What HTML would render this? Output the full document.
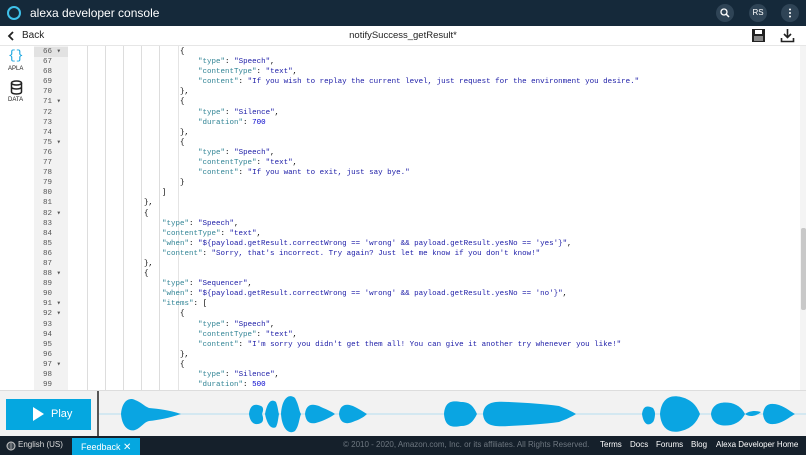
<!DOCTYPE html>
<html><head><meta charset="utf-8"><style>
*{margin:0;padding:0;box-sizing:border-box}
body{width:806px;height:455px;overflow:hidden;background:#fff;font-family:"Liberation Sans",sans-serif;position:relative}
.hdr{position:absolute;left:0;top:0;width:806px;height:26px;background:#15293a}
.ttl{position:absolute;left:30px;top:6px;color:#fff;font-size:12px}
.circ{position:absolute;top:4px;width:18px;height:18px;border-radius:50%;background:#2f4456;color:#fff;font-size:8px;text-align:center;line-height:18px}
.tb{position:absolute;left:0;top:26px;width:806px;height:20px;background:#fff;border-bottom:1px solid #e6e6e6}
.side{position:absolute;left:0;top:46px;width:34px;height:344px;background:#fff}
.gut{position:absolute;left:34px;top:46px;width:34px;height:344px;background:#f2f2f2}
.ed{position:absolute;left:68px;top:46px;width:732px;height:344px;overflow:hidden;
background:linear-gradient(#ddd,#ddd) 19px 0/1px 100% no-repeat,linear-gradient(#ddd,#ddd) 37px 0/1px 100% no-repeat,linear-gradient(#ddd,#ddd) 55px 0/1px 100% no-repeat,linear-gradient(#ddd,#ddd) 73px 0/1px 100% no-repeat,linear-gradient(#ddd,#ddd) 91px 0/1px 100% no-repeat,linear-gradient(#e4e4e4,#e4e4e4) 110px 0/1px 100% no-repeat,#fff}
.code,.nums{font-family:"Liberation Mono",monospace;font-size:7.5px;line-height:10.1px;white-space:pre}
.code{position:absolute;left:72px;top:47px;color:#000}
.nums{position:absolute;left:34px;top:47px;width:33px;text-align:right;color:#555;padding-right:6px}
.k{color:#318495}.s{color:#1a1aa6}.n{color:#0000cd}
.sb{position:absolute;left:800px;top:46px;width:6px;height:344px;background:#f4f4f4}
.aud{position:absolute;left:0;top:390px;width:806px;height:46px;background:#f2f2f2;border-top:1px solid #ddd}
.play{position:absolute;left:6px;top:8px;width:85px;height:31px;background:#05a7e0;color:#fff;font-size:11px}
.ft{position:absolute;left:0;top:436px;width:806px;height:19px;background:#15202b;font-size:8px;color:#fff}
</style></head><body>
<div class="hdr">
<div style="position:absolute;left:7px;top:6px;width:14px;height:14px;border-radius:50%;border:2.5px solid #3fc1ea"></div>
<div class="ttl">alexa developer console</div>
<div class="circ" style="left:716px"><svg width="18" height="18"><circle cx="8" cy="8" r="3" fill="none" stroke="#fff" stroke-width="1.3"/><path d="M10 10l3 3" stroke="#fff" stroke-width="1.5"/></svg></div>
<div class="circ" style="left:749px">RS</div>
<div class="circ" style="left:781px"><svg width="18" height="18"><circle cx="9" cy="5.5" r="1" fill="#fff"/><circle cx="9" cy="9" r="1" fill="#fff"/><circle cx="9" cy="12.5" r="1" fill="#fff"/></svg></div>
</div>
<div class="tb">
<svg style="position:absolute;left:7px;top:5px" width="8" height="10"><path d="M6 1L2 5l4 4" stroke="#222" stroke-width="1.8" fill="none"/></svg>
<div style="position:absolute;left:22px;top:4px;font-size:10px;color:#222">Back</div>
<div style="position:absolute;left:0;width:806px;top:4px;text-align:center;font-size:9.5px;color:#222">notifySuccess_getResult*</div>
<svg style="position:absolute;left:751px;top:2px" width="15" height="15"><rect x="1" y="1" width="13" height="13" fill="#222"/><rect x="4" y="2" width="7" height="4" fill="#fff"/><rect x="3" y="8" width="9" height="5" fill="#888"/></svg>
<svg style="position:absolute;left:780px;top:2px" width="15" height="15"><path d="M7.5 1v8M4 6l3.5 3.5L11 6M1.5 10v3.5h12V10" stroke="#222" stroke-width="1.6" fill="none"/></svg>
</div>
<div class="side">
<div style="position:absolute;left:8px;top:2px;color:#1aa6e0;font-size:13px;font-family:'Liberation Mono',monospace">{}</div>
<div style="position:absolute;left:8px;top:20px;font-size:6px;color:#222">APLA</div>
<svg style="position:absolute;left:10px;top:34px" width="13" height="15"><ellipse cx="6.5" cy="3" rx="5" ry="2" fill="none" stroke="#222" stroke-width="1.5"/><path d="M1.5 3v9c0 2.6 10 2.6 10 0V3M1.5 7c0 2.6 10 2.6 10 0" stroke="#222" stroke-width="1.5" fill="none"/></svg>
<div style="position:absolute;left:8px;top:51px;font-size:6px;color:#222">DATA</div>
</div>
<div class="gut"><div style="position:absolute;left:0;top:1px;width:34px;height:10px;background:#e2e2e2"></div></div>
<div class="ed"></div>
<div class="nums">66 ▾
67  
68  
69  
70  
71 ▾
72  
73  
74  
75 ▾
76  
77  
78  
79  
80  
81  
82 ▾
83  
84  
85  
86  
87  
88 ▾
89  
90  
91 ▾
92 ▾
93  
94  
95  
96  
97 ▾
98  
99  </div>
<div class="code">                        {
                            <span class="k">"type"</span>: <span class="s">"Speech"</span>,
                            <span class="k">"contentType"</span>: <span class="s">"text"</span>,
                            <span class="k">"content"</span>: <span class="s">"If you wish to replay the current level, just request for the environment you desire."</span>
                        },
                        {
                            <span class="k">"type"</span>: <span class="s">"Silence"</span>,
                            <span class="k">"duration"</span>: <span class="n">700</span>
                        },
                        {
                            <span class="k">"type"</span>: <span class="s">"Speech"</span>,
                            <span class="k">"contentType"</span>: <span class="s">"text"</span>,
                            <span class="k">"content"</span>: <span class="s">"If you want to exit, just say bye."</span>
                        }
                    ]
                },
                {
                    <span class="k">"type"</span>: <span class="s">"Speech"</span>,
                    <span class="k">"contentType"</span>: <span class="s">"text"</span>,
                    <span class="k">"when"</span>: <span class="s">"${payload.getResult.correctWrong == 'wrong' &amp;&amp; payload.getResult.yesNo == 'yes'}"</span>,
                    <span class="k">"content"</span>: <span class="s">"Sorry, that's incorrect. Try again? Just let me know if you don't know!"</span>
                },
                {
                    <span class="k">"type"</span>: <span class="s">"Sequencer"</span>,
                    <span class="k">"when"</span>: <span class="s">"${payload.getResult.correctWrong == 'wrong' &amp;&amp; payload.getResult.yesNo == 'no'}"</span>,
                    <span class="k">"items"</span>: [
                        {
                            <span class="k">"type"</span>: <span class="s">"Speech"</span>,
                            <span class="k">"contentType"</span>: <span class="s">"text"</span>,
                            <span class="k">"content"</span>: <span class="s">"I'm sorry you didn't get them all! You can give it another try whenever you like!"</span>
                        },
                        {
                            <span class="k">"type"</span>: <span class="s">"Silence"</span>,
                            <span class="k">"duration"</span>: <span class="n">500</span></div>
<div class="sb"><div style="position:absolute;left:1px;top:182px;width:5px;height:82px;background:#c8c8c8;border-radius:2px"></div></div>
<div class="aud">
<div class="play"><svg style="position:absolute;left:26px;top:8px" width="12" height="14"><path d="M1 0l11 7-11 7z" fill="#fff"/></svg><span style="position:absolute;left:45px;top:9px">Play</span></div>
<div style="position:absolute;left:97px;top:0;width:2px;height:46px;background:#555"></div>
<svg style="position:absolute;left:99px;top:0" width="707" height="46">
<line x1="0" y1="23" x2="707" y2="23" stroke="#b5def0" stroke-width="1"/>
<g fill="#0aa5e2">
<path d="M22 23C23 10 30 6 36 9C42 11 45 15 50 17C60 18 70 19 82 23C70 27 60 29 50 30C45 31 42 37 36 39C30 41 23 36 22 23Z"/>
<path d="M150 23C151 14 156 12 162 15C164 16 165 18 163 23C165 28 164 31 162 32C156 35 151 32 150 23Z"/>
<path d="M166 23C168 12 172 7 177 11C179 16 179 20 180 23C179 28 179 32 177 36C172 39 168 33 166 23Z"/>
<path d="M182 23C183 7 190 2 196 7C200 14 200 20 202 23C200 28 200 35 196 40C190 44 183 38 182 23Z"/>
<path d="M206 23C207 14 212 12 220 15C226 18 232 20 236 23C232 26 226 29 220 31C212 34 207 32 206 23Z"/>
<path d="M240 23C241 13 248 12 256 16C262 19 266 22 268 23C266 25 262 28 256 30C248 34 241 33 240 23Z"/>
<path d="M345 23C346 11 352 9 362 11C370 11 374 14 378 23C374 31 370 35 362 35C352 37 346 35 345 23Z"/>
<path d="M384 23C385 11 395 10 410 11C430 12 445 13 460 15C468 18 472 20 477 23C472 26 468 28 460 31C445 33 430 34 410 35C395 36 385 35 384 23Z"/>
<path d="M543 23C544 15 548 14 554 17C556 20 556 22 556 23C556 26 555 30 554 31C548 37 544 31 543 23Z"/>
<path d="M561 23C562 9 570 3 582 6C594 9 598 16 601 23C598 30 594 37 582 40C570 43 562 37 561 23Z"/>
<path d="M612 23C613 14 620 10 632 12C640 14 644 19 646 23C644 27 640 32 632 34C620 36 613 32 612 23Z"/>
<path d="M646 23C650 20 656 19 662 21C656 26 650 26 646 23Z"/>
<path d="M664 23C665 14 670 11 680 14C688 17 692 21 696 23C692 25 688 29 680 32C670 35 665 32 664 23Z"/>
</g></svg>
</div>
<div class="ft">
<svg style="position:absolute;left:6px;top:5px" width="10" height="10"><circle cx="5" cy="5" r="4" fill="none" stroke="#ccc"/><path d="M1 5h8M5 1v8M2 3h6M2 7h6" stroke="#ccc" stroke-width=".6"/></svg>
<div style="position:absolute;left:18px;top:4px;color:#ddd">English (US)</div>
<div style="position:absolute;left:72px;top:2px;width:68px;height:17px;background:#05a7e0;color:#fff;font-size:9px;padding:4px 0 0 9px">Feedback <span style="font-size:10px">✕</span></div>
<div style="position:absolute;left:343px;top:4px;color:#6e7780">© 2010 - 2020, Amazon.com, Inc. or its affiliates. All Rights Reserved.</div>
<div style="position:absolute;left:600px;top:4px">Terms</div>
<div style="position:absolute;left:630px;top:4px">Docs</div>
<div style="position:absolute;left:656px;top:4px">Forums</div>
<div style="position:absolute;left:691px;top:4px">Blog</div>
<div style="position:absolute;left:716px;top:4px">Alexa Developer Home</div>
</div>
</body></html>
